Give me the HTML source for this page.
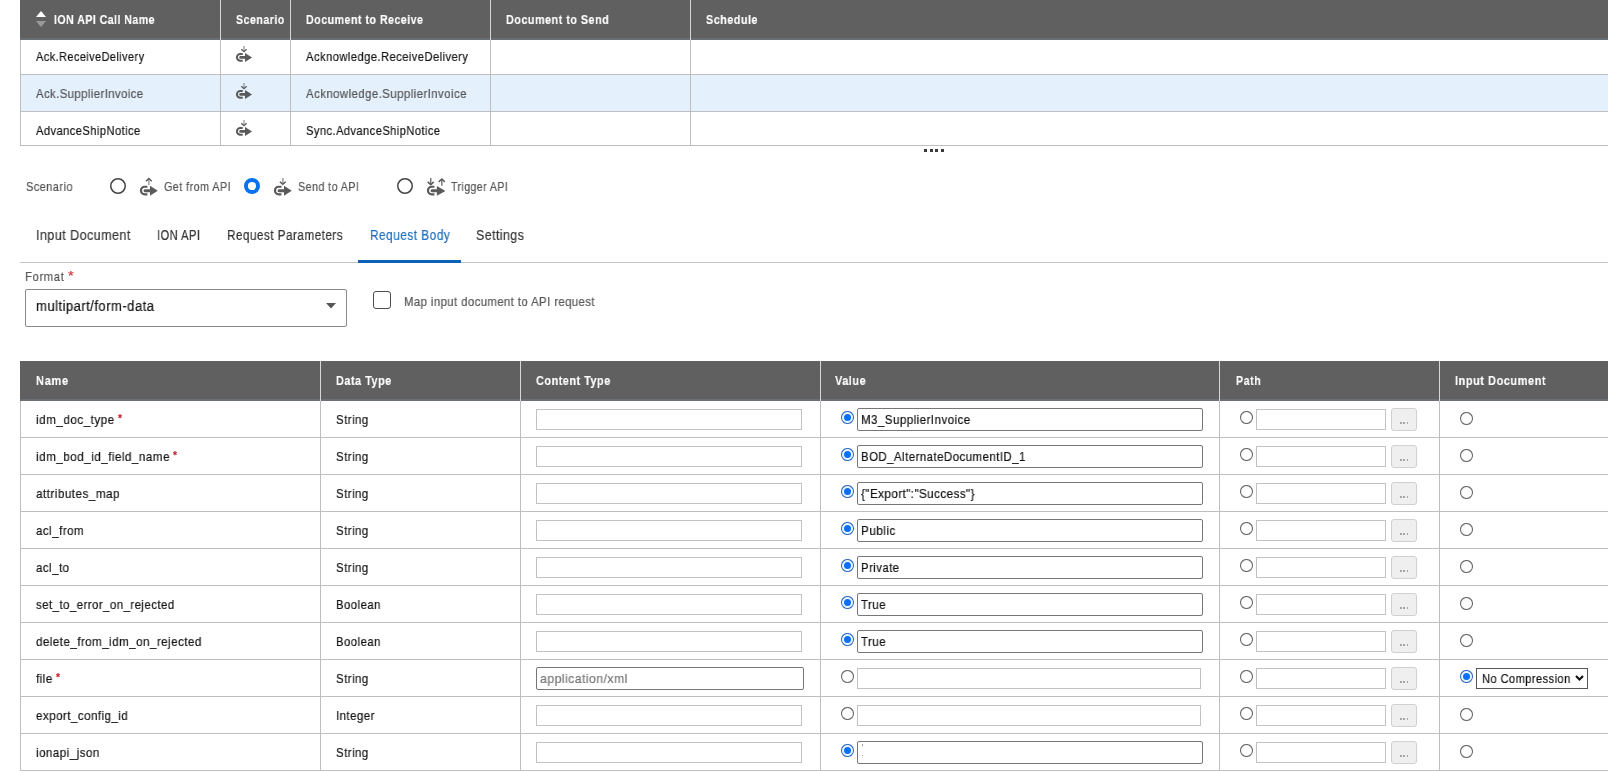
<!DOCTYPE html>
<html><head><meta charset="utf-8"><style>
html,body{margin:0;padding:0;background:#fff;}
body{width:1608px;height:773px;position:relative;overflow:hidden;font-family:"Liberation Sans",sans-serif;}
body>div,body>span,body>svg{position:absolute;}
.t{white-space:nowrap;line-height:normal;transform-origin:0 0;will-change:transform;-webkit-text-stroke:0.2px currentColor;}
.b{-webkit-text-stroke:0.15px currentColor;}
</style></head><body>
<div style="left:20px;top:0px;width:1588px;height:38px;background:#606060"></div>
<div style="left:20px;top:38px;width:1588px;height:2px;background:#6a6f75"></div>
<div style="left:20px;top:75px;width:1588px;height:36px;background:#e4f0fc"></div>
<div style="left:20px;top:74px;width:1588px;height:1px;background:#bebebe"></div>
<div style="left:20px;top:111px;width:1588px;height:1px;background:#bebebe"></div>
<div style="left:20px;top:145px;width:1588px;height:1px;background:#bebebe"></div>
<div style="left:20px;top:40px;width:1px;height:106px;background:#bebebe"></div>
<div style="left:220px;top:0px;width:1px;height:40px;background:#d6d6d6"></div>
<div style="left:220px;top:40px;width:1px;height:105px;background:#bebebe"></div>
<div style="left:290px;top:0px;width:1px;height:40px;background:#d6d6d6"></div>
<div style="left:290px;top:40px;width:1px;height:105px;background:#bebebe"></div>
<div style="left:490px;top:0px;width:1px;height:40px;background:#d6d6d6"></div>
<div style="left:490px;top:40px;width:1px;height:105px;background:#bebebe"></div>
<div style="left:690px;top:0px;width:1px;height:40px;background:#d6d6d6"></div>
<div style="left:690px;top:40px;width:1px;height:105px;background:#bebebe"></div>
<svg style="left:36px;top:11px" width="10" height="17" viewBox="0 0 10 17"><polygon points="0,6 5,0 10,6" fill="#fff"/><polygon points="0,10 10,10 5,16" fill="#9a9a9a"/></svg>
<span class="t b" style="left:53.70px;top:11.78px;font-size:13.5px;font-weight:700;color:#fff;letter-spacing:0.559px;transform:scaleX(0.7868);">ION API Call Name</span>
<span class="t b" style="left:236.00px;top:11.78px;font-size:13.5px;font-weight:700;color:#fff;letter-spacing:0.613px;transform:scaleX(0.7877);">Scenario</span>
<span class="t b" style="left:306.40px;top:11.78px;font-size:13.5px;font-weight:700;color:#fff;letter-spacing:0.574px;transform:scaleX(0.7926);">Document to Receive</span>
<span class="t b" style="left:506.30px;top:11.78px;font-size:13.5px;font-weight:700;color:#fff;letter-spacing:0.598px;transform:scaleX(0.8009);">Document to Send</span>
<span class="t b" style="left:706.00px;top:11.78px;font-size:13.5px;font-weight:700;color:#fff;letter-spacing:0.645px;transform:scaleX(0.7980);">Schedule</span>
<span class="t" style="left:36.40px;top:49.23px;font-size:13px;font-weight:400;color:#151515;letter-spacing:0.498px;transform:scaleX(0.8434);">Ack.ReceiveDelivery</span>
<span class="t" style="left:306.00px;top:49.23px;font-size:13px;font-weight:400;color:#151515;letter-spacing:0.506px;transform:scaleX(0.8611);">Acknowledge.ReceiveDelivery</span>
<svg style="left:236px;top:46px;overflow:visible" width="16.00" height="16.00" viewBox="0 0 16 16"><path d="M6.7,7.9 H4.35 A3.45,3.45 0 0 0 4.35,14.8 H6.7" fill="none" stroke="#5a5a5a" stroke-width="2.0"/><path d="M4.6,11.4 H10" stroke="#5a5a5a" stroke-width="2.7" stroke-linecap="round"/><polygon points="9,7 16,11.4 9,15.9" fill="#5a5a5a"/><path d="M8,0 V5" stroke="#888" stroke-width="1.1"/><path d="M5.3,3.3 L7.95,5.7 L10.6,3.3" fill="none" stroke="#5a5a5a" stroke-width="1.3"/></svg>
<span class="t" style="left:36.40px;top:85.83px;font-size:13px;font-weight:400;color:#555;letter-spacing:0.477px;transform:scaleX(0.8724);">Ack.SupplierInvoice</span>
<span class="t" style="left:306.00px;top:85.83px;font-size:13px;font-weight:400;color:#555;letter-spacing:0.492px;transform:scaleX(0.8784);">Acknowledge.SupplierInvoice</span>
<svg style="left:236px;top:83px;overflow:visible" width="16.00" height="16.00" viewBox="0 0 16 16"><path d="M6.7,7.9 H4.35 A3.45,3.45 0 0 0 4.35,14.8 H6.7" fill="none" stroke="#5a5a5a" stroke-width="2.0"/><path d="M4.6,11.4 H10" stroke="#5a5a5a" stroke-width="2.7" stroke-linecap="round"/><polygon points="9,7 16,11.4 9,15.9" fill="#5a5a5a"/><path d="M8,0 V5" stroke="#888" stroke-width="1.1"/><path d="M5.3,3.3 L7.95,5.7 L10.6,3.3" fill="none" stroke="#5a5a5a" stroke-width="1.3"/></svg>
<span class="t" style="left:36.40px;top:122.83px;font-size:13px;font-weight:400;color:#151515;letter-spacing:0.534px;transform:scaleX(0.8541);">AdvanceShipNotice</span>
<span class="t" style="left:306.00px;top:122.83px;font-size:13px;font-weight:400;color:#151515;letter-spacing:0.523px;transform:scaleX(0.8537);">Sync.AdvanceShipNotice</span>
<svg style="left:236px;top:120px;overflow:visible" width="16.00" height="16.00" viewBox="0 0 16 16"><path d="M6.7,7.9 H4.35 A3.45,3.45 0 0 0 4.35,14.8 H6.7" fill="none" stroke="#5a5a5a" stroke-width="2.0"/><path d="M4.6,11.4 H10" stroke="#5a5a5a" stroke-width="2.7" stroke-linecap="round"/><polygon points="9,7 16,11.4 9,15.9" fill="#5a5a5a"/><path d="M8,0 V5" stroke="#888" stroke-width="1.1"/><path d="M5.3,3.3 L7.95,5.7 L10.6,3.3" fill="none" stroke="#5a5a5a" stroke-width="1.3"/></svg>
<div style="left:924px;top:149px;width:3px;height:3px;background:#3a3a3a"></div>
<div style="left:929.6px;top:149px;width:3px;height:3px;background:#3a3a3a"></div>
<div style="left:935.3px;top:149px;width:3px;height:3px;background:#3a3a3a"></div>
<div style="left:941px;top:149px;width:3px;height:3px;background:#3a3a3a"></div>
<span class="t" style="left:25.50px;top:179.24px;font-size:13px;font-weight:400;color:#555;letter-spacing:0.552px;transform:scaleX(0.8428);">Scenario</span>
<svg style="left:110px;top:178px" width="16" height="16" viewBox="0 0 16 16"><circle cx="8" cy="8" r="7.25" fill="#fff" stroke="#444" stroke-width="1.5"/></svg>
<svg style="left:140.2px;top:178.1px;overflow:visible" width="17.76" height="17.76" viewBox="0 0 16 16"><path d="M6.7,7.9 H4.35 A3.45,3.45 0 0 0 4.35,14.8 H6.7" fill="none" stroke="#5a5a5a" stroke-width="2.0"/><path d="M4.6,11.4 H10" stroke="#5a5a5a" stroke-width="2.7" stroke-linecap="round"/><polygon points="9,7 16,11.4 9,15.9" fill="#5a5a5a"/><path d="M8,1 V6.2" stroke="#888" stroke-width="1.1"/><path d="M5.3,2.9 L7.95,0.5 L10.6,2.9" fill="none" stroke="#5a5a5a" stroke-width="1.3"/></svg>
<span class="t" style="left:164.00px;top:179.24px;font-size:13px;font-weight:400;color:#555;letter-spacing:0.509px;transform:scaleX(0.8324);">Get from API</span>
<svg style="left:244px;top:178px" width="16" height="16" viewBox="0 0 16 16"><circle cx="8" cy="8" r="6.05" fill="#fff" stroke="#0a72ea" stroke-width="3.9"/></svg>
<svg style="left:274.2px;top:177.5px;overflow:visible" width="17.76" height="17.76" viewBox="0 0 16 16"><path d="M6.7,7.9 H4.35 A3.45,3.45 0 0 0 4.35,14.8 H6.7" fill="none" stroke="#5a5a5a" stroke-width="2.0"/><path d="M4.6,11.4 H10" stroke="#5a5a5a" stroke-width="2.7" stroke-linecap="round"/><polygon points="9,7 16,11.4 9,15.9" fill="#5a5a5a"/><path d="M8,0 V5" stroke="#888" stroke-width="1.1"/><path d="M5.3,3.3 L7.95,5.7 L10.6,3.3" fill="none" stroke="#5a5a5a" stroke-width="1.3"/></svg>
<span class="t" style="left:297.70px;top:179.24px;font-size:13px;font-weight:400;color:#555;letter-spacing:0.517px;transform:scaleX(0.8248);">Send to API</span>
<svg style="left:397px;top:178px" width="16" height="16" viewBox="0 0 16 16"><circle cx="8" cy="8" r="7.25" fill="#fff" stroke="#444" stroke-width="1.5"/></svg>
<svg style="left:427.2px;top:177.6px;overflow:visible" width="17.76" height="17.76" viewBox="0 0 16 16"><path d="M6.7,7.9 H4.35 A3.45,3.45 0 0 0 4.35,14.8 H6.7" fill="none" stroke="#5a5a5a" stroke-width="2.0"/><path d="M4.6,11.4 H10" stroke="#5a5a5a" stroke-width="2.7" stroke-linecap="round"/><polygon points="8.9,7.3 16.6,11.7 8.9,16.1" fill="#5a5a5a"/><path d="M3.4,0 V5.6" stroke="#5a5a5a" stroke-width="1.1"/><path d="M0.6,3.5 L3.4,6.0 L6.0,3.5" fill="none" stroke="#5a5a5a" stroke-width="1.3"/><path d="M13.4,1.3 V6.9" stroke="#5a5a5a" stroke-width="1.1"/><path d="M10.6,3.5 L13.4,0.9 L16,3.5" fill="none" stroke="#5a5a5a" stroke-width="1.3"/></svg>
<span class="t" style="left:451.30px;top:179.24px;font-size:13px;font-weight:400;color:#555;letter-spacing:0.486px;transform:scaleX(0.8170);">Trigger API</span>
<span class="t" style="left:35.70px;top:226.93px;font-size:14px;font-weight:400;color:#333;letter-spacing:0.572px;transform:scaleX(0.8873);">Input Document</span>
<span class="t" style="left:157.00px;top:226.93px;font-size:14px;font-weight:400;color:#333;letter-spacing:0.634px;transform:scaleX(0.7908);">ION API</span>
<span class="t" style="left:227.30px;top:226.93px;font-size:14px;font-weight:400;color:#333;letter-spacing:0.568px;transform:scaleX(0.8373);">Request Parameters</span>
<span class="t" style="left:369.60px;top:226.93px;font-size:14px;font-weight:400;color:#1f6fbf;letter-spacing:0.602px;transform:scaleX(0.8438);">Request Body</span>
<span class="t" style="left:475.50px;top:226.93px;font-size:14px;font-weight:400;color:#333;letter-spacing:0.544px;transform:scaleX(0.8789);">Settings</span>
<div style="left:20px;top:262px;width:1588px;height:1px;background:#c4c4c4"></div>
<div style="left:358px;top:260px;width:103px;height:3px;background:#0d62b5"></div>
<span class="t" style="left:25.40px;top:269.44px;font-size:13px;font-weight:400;color:#555;letter-spacing:0.620px;transform:scaleX(0.8764);">Format</span>
<span class="t" style="left:68.30px;top:268.24px;font-size:13px;font-weight:400;color:#d33;letter-spacing:0.000px;transform:scaleX(1.1272);">*</span>
<div style="left:25px;top:289px;width:322px;height:38px;box-sizing:border-box;border:1px solid #8a8a8a;border-radius:2px;background:#fff"></div>
<span class="t" style="left:36.20px;top:297.93px;font-size:14px;font-weight:400;color:#151515;letter-spacing:0.491px;transform:scaleX(0.9339);">multipart/form-data</span>
<svg style="left:326px;top:303px" width="10" height="6" viewBox="0 0 10 6"><polygon points="0,0 10,0 5,5.5" fill="#555"/></svg>
<div style="left:373px;top:291px;width:18px;height:18px;box-sizing:border-box;border:1.7px solid #4d4d4d;border-radius:3px;background:#fff"></div>
<span class="t" style="left:403.50px;top:294.24px;font-size:13px;font-weight:400;color:#555;letter-spacing:0.478px;transform:scaleX(0.8724);">Map input document to API request</span>
<div style="left:20px;top:361px;width:1588px;height:38px;background:#606060"></div>
<div style="left:20px;top:399px;width:1588px;height:2px;background:#6a6f75"></div>
<div style="left:320px;top:361px;width:1px;height:40px;background:#d6d6d6"></div>
<div style="left:520px;top:361px;width:1px;height:40px;background:#d6d6d6"></div>
<div style="left:820px;top:361px;width:1px;height:40px;background:#d6d6d6"></div>
<div style="left:1219px;top:361px;width:1px;height:40px;background:#d6d6d6"></div>
<div style="left:1439px;top:361px;width:1px;height:40px;background:#d6d6d6"></div>
<div style="left:20px;top:401px;width:1px;height:370px;background:#bebebe"></div>
<div style="left:320px;top:401px;width:1px;height:370px;background:#bebebe"></div>
<div style="left:520px;top:401px;width:1px;height:370px;background:#bebebe"></div>
<div style="left:820px;top:401px;width:1px;height:370px;background:#bebebe"></div>
<div style="left:1219px;top:401px;width:1px;height:370px;background:#bebebe"></div>
<div style="left:1439px;top:401px;width:1px;height:370px;background:#bebebe"></div>
<div style="left:20px;top:437px;width:1588px;height:1px;background:#bebebe"></div>
<div style="left:20px;top:474px;width:1588px;height:1px;background:#bebebe"></div>
<div style="left:20px;top:511px;width:1588px;height:1px;background:#bebebe"></div>
<div style="left:20px;top:548px;width:1588px;height:1px;background:#bebebe"></div>
<div style="left:20px;top:585px;width:1588px;height:1px;background:#bebebe"></div>
<div style="left:20px;top:622px;width:1588px;height:1px;background:#bebebe"></div>
<div style="left:20px;top:659px;width:1588px;height:1px;background:#bebebe"></div>
<div style="left:20px;top:696px;width:1588px;height:1px;background:#bebebe"></div>
<div style="left:20px;top:733px;width:1588px;height:1px;background:#bebebe"></div>
<div style="left:20px;top:770px;width:1588px;height:1px;background:#bebebe"></div>
<span class="t b" style="left:35.50px;top:372.78px;font-size:13.5px;font-weight:700;color:#fff;letter-spacing:0.923px;transform:scaleX(0.8118);">Name</span>
<span class="t b" style="left:335.80px;top:372.78px;font-size:13.5px;font-weight:700;color:#fff;letter-spacing:0.598px;transform:scaleX(0.8097);">Data Type</span>
<span class="t b" style="left:535.80px;top:372.78px;font-size:13.5px;font-weight:700;color:#fff;letter-spacing:0.583px;transform:scaleX(0.8094);">Content Type</span>
<span class="t b" style="left:835.20px;top:372.78px;font-size:13.5px;font-weight:700;color:#fff;letter-spacing:0.664px;transform:scaleX(0.8067);">Value</span>
<span class="t b" style="left:1235.60px;top:372.78px;font-size:13.5px;font-weight:700;color:#fff;letter-spacing:0.734px;transform:scaleX(0.7852);">Path</span>
<span class="t b" style="left:1455.20px;top:372.78px;font-size:13.5px;font-weight:700;color:#fff;letter-spacing:0.595px;transform:scaleX(0.8192);">Input Document</span>
<span class="t" style="left:36.00px;top:412.04px;font-size:13px;font-weight:400;color:#151515;letter-spacing:0.554px;transform:scaleX(0.8985);">idm_doc_type</span>
<span class="t b" style="left:117.80px;top:413.35px;font-size:10px;font-weight:700;color:#c62430;letter-spacing:0.000px;transform:scaleX(1.0283);">*</span>
<span class="t" style="left:336.00px;top:412.04px;font-size:13px;font-weight:400;color:#151515;letter-spacing:0.511px;transform:scaleX(0.8819);">String</span>
<div style="left:536px;top:409px;width:266px;height:21px;box-sizing:border-box;border:1px solid #c2c2c2;background:#fff"></div>
<svg style="left:841px;top:411px" width="13" height="13" viewBox="0 0 13 13"><circle cx="6.5" cy="6.5" r="6" fill="#fff" stroke="#356cc4" stroke-width="1.1"/><circle cx="6.5" cy="6.5" r="4.6" fill="none" stroke="#c8f0ff" stroke-width="0.8"/><circle cx="6.5" cy="6.5" r="3.5" fill="#0a6ff8"/></svg>
<div style="left:857px;top:408px;width:346px;height:23px;box-sizing:border-box;border:1px solid #767676;border-radius:2px;background:#fff"></div>
<span class="t" style="left:861.00px;top:412.04px;font-size:13px;font-weight:400;color:#111;letter-spacing:0.506px;transform:scaleX(0.8894);">M3_SupplierInvoice</span>
<svg style="left:1240px;top:411px" width="13" height="13" viewBox="0 0 13 13"><circle cx="6.5" cy="6.5" r="6" fill="#fff" stroke="#6a6a6a" stroke-width="1.1"/></svg>
<div style="left:1256px;top:409px;width:130px;height:21px;box-sizing:border-box;border:1px solid #c2c2c2;background:#fff"></div>
<div style="left:1391px;top:408px;width:26px;height:23px;box-sizing:border-box;border:1px solid #d0d0d0;border-radius:3px;background:#efefef"></div>
<div style="left:1400px;top:422.3px;width:1.7px;height:1.7px;background:#a5a5a5"></div>
<div style="left:1403.3px;top:422.3px;width:1.7px;height:1.7px;background:#a5a5a5"></div>
<div style="left:1406.6px;top:422.3px;width:1.7px;height:1.7px;background:#a5a5a5"></div>
<svg style="left:1460px;top:412px" width="13" height="13" viewBox="0 0 13 13"><circle cx="6.5" cy="6.5" r="6" fill="#fff" stroke="#6a6a6a" stroke-width="1.1"/></svg>
<span class="t" style="left:36.00px;top:449.04px;font-size:13px;font-weight:400;color:#151515;letter-spacing:0.520px;transform:scaleX(0.9000);">idm_bod_id_field_name</span>
<span class="t b" style="left:173.20px;top:450.35px;font-size:10px;font-weight:700;color:#c62430;letter-spacing:0.000px;transform:scaleX(1.0283);">*</span>
<span class="t" style="left:336.00px;top:449.04px;font-size:13px;font-weight:400;color:#151515;letter-spacing:0.511px;transform:scaleX(0.8819);">String</span>
<div style="left:536px;top:446px;width:266px;height:21px;box-sizing:border-box;border:1px solid #c2c2c2;background:#fff"></div>
<svg style="left:841px;top:448px" width="13" height="13" viewBox="0 0 13 13"><circle cx="6.5" cy="6.5" r="6" fill="#fff" stroke="#356cc4" stroke-width="1.1"/><circle cx="6.5" cy="6.5" r="4.6" fill="none" stroke="#c8f0ff" stroke-width="0.8"/><circle cx="6.5" cy="6.5" r="3.5" fill="#0a6ff8"/></svg>
<div style="left:857px;top:445px;width:346px;height:23px;box-sizing:border-box;border:1px solid #767676;border-radius:2px;background:#fff"></div>
<span class="t" style="left:861.00px;top:449.04px;font-size:13px;font-weight:400;color:#111;letter-spacing:0.546px;transform:scaleX(0.8779);">BOD_AlternateDocumentID_1</span>
<svg style="left:1240px;top:448px" width="13" height="13" viewBox="0 0 13 13"><circle cx="6.5" cy="6.5" r="6" fill="#fff" stroke="#6a6a6a" stroke-width="1.1"/></svg>
<div style="left:1256px;top:446px;width:130px;height:21px;box-sizing:border-box;border:1px solid #c2c2c2;background:#fff"></div>
<div style="left:1391px;top:445px;width:26px;height:23px;box-sizing:border-box;border:1px solid #d0d0d0;border-radius:3px;background:#efefef"></div>
<div style="left:1400px;top:459.3px;width:1.7px;height:1.7px;background:#a5a5a5"></div>
<div style="left:1403.3px;top:459.3px;width:1.7px;height:1.7px;background:#a5a5a5"></div>
<div style="left:1406.6px;top:459.3px;width:1.7px;height:1.7px;background:#a5a5a5"></div>
<svg style="left:1460px;top:449px" width="13" height="13" viewBox="0 0 13 13"><circle cx="6.5" cy="6.5" r="6" fill="#fff" stroke="#6a6a6a" stroke-width="1.1"/></svg>
<span class="t" style="left:36.00px;top:486.04px;font-size:13px;font-weight:400;color:#151515;letter-spacing:0.498px;transform:scaleX(0.9030);">attributes_map</span>
<span class="t" style="left:336.00px;top:486.04px;font-size:13px;font-weight:400;color:#151515;letter-spacing:0.511px;transform:scaleX(0.8819);">String</span>
<div style="left:536px;top:483px;width:266px;height:21px;box-sizing:border-box;border:1px solid #c2c2c2;background:#fff"></div>
<svg style="left:841px;top:485px" width="13" height="13" viewBox="0 0 13 13"><circle cx="6.5" cy="6.5" r="6" fill="#fff" stroke="#356cc4" stroke-width="1.1"/><circle cx="6.5" cy="6.5" r="4.6" fill="none" stroke="#c8f0ff" stroke-width="0.8"/><circle cx="6.5" cy="6.5" r="3.5" fill="#0a6ff8"/></svg>
<div style="left:857px;top:482px;width:346px;height:23px;box-sizing:border-box;border:1px solid #767676;border-radius:2px;background:#fff"></div>
<span class="t" style="left:861.00px;top:486.04px;font-size:13px;font-weight:400;color:#111;letter-spacing:0.465px;transform:scaleX(0.8987);">{"Export":"Success"}</span>
<svg style="left:1240px;top:485px" width="13" height="13" viewBox="0 0 13 13"><circle cx="6.5" cy="6.5" r="6" fill="#fff" stroke="#6a6a6a" stroke-width="1.1"/></svg>
<div style="left:1256px;top:483px;width:130px;height:21px;box-sizing:border-box;border:1px solid #c2c2c2;background:#fff"></div>
<div style="left:1391px;top:482px;width:26px;height:23px;box-sizing:border-box;border:1px solid #d0d0d0;border-radius:3px;background:#efefef"></div>
<div style="left:1400px;top:496.3px;width:1.7px;height:1.7px;background:#a5a5a5"></div>
<div style="left:1403.3px;top:496.3px;width:1.7px;height:1.7px;background:#a5a5a5"></div>
<div style="left:1406.6px;top:496.3px;width:1.7px;height:1.7px;background:#a5a5a5"></div>
<svg style="left:1460px;top:486px" width="13" height="13" viewBox="0 0 13 13"><circle cx="6.5" cy="6.5" r="6" fill="#fff" stroke="#6a6a6a" stroke-width="1.1"/></svg>
<span class="t" style="left:36.00px;top:523.03px;font-size:13px;font-weight:400;color:#151515;letter-spacing:0.536px;transform:scaleX(0.8879);">acl_from</span>
<span class="t" style="left:336.00px;top:523.03px;font-size:13px;font-weight:400;color:#151515;letter-spacing:0.511px;transform:scaleX(0.8819);">String</span>
<div style="left:536px;top:520px;width:266px;height:21px;box-sizing:border-box;border:1px solid #c2c2c2;background:#fff"></div>
<svg style="left:841px;top:522px" width="13" height="13" viewBox="0 0 13 13"><circle cx="6.5" cy="6.5" r="6" fill="#fff" stroke="#356cc4" stroke-width="1.1"/><circle cx="6.5" cy="6.5" r="4.6" fill="none" stroke="#c8f0ff" stroke-width="0.8"/><circle cx="6.5" cy="6.5" r="3.5" fill="#0a6ff8"/></svg>
<div style="left:857px;top:519px;width:346px;height:23px;box-sizing:border-box;border:1px solid #767676;border-radius:2px;background:#fff"></div>
<span class="t" style="left:861.00px;top:523.03px;font-size:13px;font-weight:400;color:#111;letter-spacing:0.533px;transform:scaleX(0.9008);">Public</span>
<svg style="left:1240px;top:522px" width="13" height="13" viewBox="0 0 13 13"><circle cx="6.5" cy="6.5" r="6" fill="#fff" stroke="#6a6a6a" stroke-width="1.1"/></svg>
<div style="left:1256px;top:520px;width:130px;height:21px;box-sizing:border-box;border:1px solid #c2c2c2;background:#fff"></div>
<div style="left:1391px;top:519px;width:26px;height:23px;box-sizing:border-box;border:1px solid #d0d0d0;border-radius:3px;background:#efefef"></div>
<div style="left:1400px;top:533.3px;width:1.7px;height:1.7px;background:#a5a5a5"></div>
<div style="left:1403.3px;top:533.3px;width:1.7px;height:1.7px;background:#a5a5a5"></div>
<div style="left:1406.6px;top:533.3px;width:1.7px;height:1.7px;background:#a5a5a5"></div>
<svg style="left:1460px;top:523px" width="13" height="13" viewBox="0 0 13 13"><circle cx="6.5" cy="6.5" r="6" fill="#fff" stroke="#6a6a6a" stroke-width="1.1"/></svg>
<span class="t" style="left:36.00px;top:560.03px;font-size:13px;font-weight:400;color:#151515;letter-spacing:0.522px;transform:scaleX(0.8848);">acl_to</span>
<span class="t" style="left:336.00px;top:560.03px;font-size:13px;font-weight:400;color:#151515;letter-spacing:0.511px;transform:scaleX(0.8819);">String</span>
<div style="left:536px;top:557px;width:266px;height:21px;box-sizing:border-box;border:1px solid #c2c2c2;background:#fff"></div>
<svg style="left:841px;top:559px" width="13" height="13" viewBox="0 0 13 13"><circle cx="6.5" cy="6.5" r="6" fill="#fff" stroke="#356cc4" stroke-width="1.1"/><circle cx="6.5" cy="6.5" r="4.6" fill="none" stroke="#c8f0ff" stroke-width="0.8"/><circle cx="6.5" cy="6.5" r="3.5" fill="#0a6ff8"/></svg>
<div style="left:857px;top:556px;width:346px;height:23px;box-sizing:border-box;border:1px solid #767676;border-radius:2px;background:#fff"></div>
<span class="t" style="left:861.00px;top:560.03px;font-size:13px;font-weight:400;color:#111;letter-spacing:0.508px;transform:scaleX(0.8735);">Private</span>
<svg style="left:1240px;top:559px" width="13" height="13" viewBox="0 0 13 13"><circle cx="6.5" cy="6.5" r="6" fill="#fff" stroke="#6a6a6a" stroke-width="1.1"/></svg>
<div style="left:1256px;top:557px;width:130px;height:21px;box-sizing:border-box;border:1px solid #c2c2c2;background:#fff"></div>
<div style="left:1391px;top:556px;width:26px;height:23px;box-sizing:border-box;border:1px solid #d0d0d0;border-radius:3px;background:#efefef"></div>
<div style="left:1400px;top:570.3px;width:1.7px;height:1.7px;background:#a5a5a5"></div>
<div style="left:1403.3px;top:570.3px;width:1.7px;height:1.7px;background:#a5a5a5"></div>
<div style="left:1406.6px;top:570.3px;width:1.7px;height:1.7px;background:#a5a5a5"></div>
<svg style="left:1460px;top:560px" width="13" height="13" viewBox="0 0 13 13"><circle cx="6.5" cy="6.5" r="6" fill="#fff" stroke="#6a6a6a" stroke-width="1.1"/></svg>
<span class="t" style="left:36.00px;top:597.03px;font-size:13px;font-weight:400;color:#151515;letter-spacing:0.475px;transform:scaleX(0.8848);">set_to_error_on_rejected</span>
<span class="t" style="left:336.00px;top:597.03px;font-size:13px;font-weight:400;color:#151515;letter-spacing:0.599px;transform:scaleX(0.8655);">Boolean</span>
<div style="left:536px;top:594px;width:266px;height:21px;box-sizing:border-box;border:1px solid #c2c2c2;background:#fff"></div>
<svg style="left:841px;top:596px" width="13" height="13" viewBox="0 0 13 13"><circle cx="6.5" cy="6.5" r="6" fill="#fff" stroke="#356cc4" stroke-width="1.1"/><circle cx="6.5" cy="6.5" r="4.6" fill="none" stroke="#c8f0ff" stroke-width="0.8"/><circle cx="6.5" cy="6.5" r="3.5" fill="#0a6ff8"/></svg>
<div style="left:857px;top:593px;width:346px;height:23px;box-sizing:border-box;border:1px solid #767676;border-radius:2px;background:#fff"></div>
<span class="t" style="left:861.00px;top:597.03px;font-size:13px;font-weight:400;color:#111;letter-spacing:0.659px;transform:scaleX(0.8716);">True</span>
<svg style="left:1240px;top:596px" width="13" height="13" viewBox="0 0 13 13"><circle cx="6.5" cy="6.5" r="6" fill="#fff" stroke="#6a6a6a" stroke-width="1.1"/></svg>
<div style="left:1256px;top:594px;width:130px;height:21px;box-sizing:border-box;border:1px solid #c2c2c2;background:#fff"></div>
<div style="left:1391px;top:593px;width:26px;height:23px;box-sizing:border-box;border:1px solid #d0d0d0;border-radius:3px;background:#efefef"></div>
<div style="left:1400px;top:607.3px;width:1.7px;height:1.7px;background:#a5a5a5"></div>
<div style="left:1403.3px;top:607.3px;width:1.7px;height:1.7px;background:#a5a5a5"></div>
<div style="left:1406.6px;top:607.3px;width:1.7px;height:1.7px;background:#a5a5a5"></div>
<svg style="left:1460px;top:597px" width="13" height="13" viewBox="0 0 13 13"><circle cx="6.5" cy="6.5" r="6" fill="#fff" stroke="#6a6a6a" stroke-width="1.1"/></svg>
<span class="t" style="left:36.00px;top:634.03px;font-size:13px;font-weight:400;color:#151515;letter-spacing:0.498px;transform:scaleX(0.8938);">delete_from_idm_on_rejected</span>
<span class="t" style="left:336.00px;top:634.03px;font-size:13px;font-weight:400;color:#151515;letter-spacing:0.599px;transform:scaleX(0.8655);">Boolean</span>
<div style="left:536px;top:631px;width:266px;height:21px;box-sizing:border-box;border:1px solid #c2c2c2;background:#fff"></div>
<svg style="left:841px;top:633px" width="13" height="13" viewBox="0 0 13 13"><circle cx="6.5" cy="6.5" r="6" fill="#fff" stroke="#356cc4" stroke-width="1.1"/><circle cx="6.5" cy="6.5" r="4.6" fill="none" stroke="#c8f0ff" stroke-width="0.8"/><circle cx="6.5" cy="6.5" r="3.5" fill="#0a6ff8"/></svg>
<div style="left:857px;top:630px;width:346px;height:23px;box-sizing:border-box;border:1px solid #767676;border-radius:2px;background:#fff"></div>
<span class="t" style="left:861.00px;top:634.03px;font-size:13px;font-weight:400;color:#111;letter-spacing:0.659px;transform:scaleX(0.8716);">True</span>
<svg style="left:1240px;top:633px" width="13" height="13" viewBox="0 0 13 13"><circle cx="6.5" cy="6.5" r="6" fill="#fff" stroke="#6a6a6a" stroke-width="1.1"/></svg>
<div style="left:1256px;top:631px;width:130px;height:21px;box-sizing:border-box;border:1px solid #c2c2c2;background:#fff"></div>
<div style="left:1391px;top:630px;width:26px;height:23px;box-sizing:border-box;border:1px solid #d0d0d0;border-radius:3px;background:#efefef"></div>
<div style="left:1400px;top:644.3px;width:1.7px;height:1.7px;background:#a5a5a5"></div>
<div style="left:1403.3px;top:644.3px;width:1.7px;height:1.7px;background:#a5a5a5"></div>
<div style="left:1406.6px;top:644.3px;width:1.7px;height:1.7px;background:#a5a5a5"></div>
<svg style="left:1460px;top:634px" width="13" height="13" viewBox="0 0 13 13"><circle cx="6.5" cy="6.5" r="6" fill="#fff" stroke="#6a6a6a" stroke-width="1.1"/></svg>
<span class="t" style="left:36.00px;top:671.03px;font-size:13px;font-weight:400;color:#151515;letter-spacing:0.417px;transform:scaleX(0.9068);">file</span>
<span class="t b" style="left:55.80px;top:672.35px;font-size:10px;font-weight:700;color:#c62430;letter-spacing:0.000px;transform:scaleX(1.0283);">*</span>
<span class="t" style="left:336.00px;top:671.03px;font-size:13px;font-weight:400;color:#151515;letter-spacing:0.511px;transform:scaleX(0.8819);">String</span>
<div style="left:536px;top:667px;width:268px;height:23px;box-sizing:border-box;border:1px solid #767676;border-radius:2px;background:#fff"></div>
<span class="t" style="left:539.90px;top:670.63px;font-size:13px;font-weight:400;color:#757575;letter-spacing:0.462px;transform:scaleX(0.9453);">application/xml</span>
<svg style="left:841px;top:670px" width="13" height="13" viewBox="0 0 13 13"><circle cx="6.5" cy="6.5" r="6" fill="#fff" stroke="#6a6a6a" stroke-width="1.1"/></svg>
<div style="left:857px;top:668px;width:344px;height:21px;box-sizing:border-box;border:1px solid #c2c2c2;background:#fff"></div>
<svg style="left:1240px;top:670px" width="13" height="13" viewBox="0 0 13 13"><circle cx="6.5" cy="6.5" r="6" fill="#fff" stroke="#6a6a6a" stroke-width="1.1"/></svg>
<div style="left:1256px;top:668px;width:130px;height:21px;box-sizing:border-box;border:1px solid #c2c2c2;background:#fff"></div>
<div style="left:1391px;top:667px;width:26px;height:23px;box-sizing:border-box;border:1px solid #d0d0d0;border-radius:3px;background:#efefef"></div>
<div style="left:1400px;top:681.3px;width:1.7px;height:1.7px;background:#a5a5a5"></div>
<div style="left:1403.3px;top:681.3px;width:1.7px;height:1.7px;background:#a5a5a5"></div>
<div style="left:1406.6px;top:681.3px;width:1.7px;height:1.7px;background:#a5a5a5"></div>
<svg style="left:1460px;top:670px" width="13" height="13" viewBox="0 0 13 13"><circle cx="6.5" cy="6.5" r="6" fill="#fff" stroke="#356cc4" stroke-width="1.1"/><circle cx="6.5" cy="6.5" r="4.6" fill="none" stroke="#c8f0ff" stroke-width="0.8"/><circle cx="6.5" cy="6.5" r="3.5" fill="#0a6ff8"/></svg>
<div style="left:1476px;top:668px;width:112px;height:21px;box-sizing:border-box;border:1px solid #555;background:#fff"></div>
<span class="t" style="left:1481.80px;top:670.94px;font-size:13px;font-weight:400;color:#111;letter-spacing:0.561px;transform:scaleX(0.8473);">No Compression</span>
<svg style="left:1574.5px;top:675.3px" width="9" height="6" viewBox="0 0 9 6"><path d="M1,1 L4.5,4.5 L8,1" fill="none" stroke="#111" stroke-width="2.1"/></svg>
<span class="t" style="left:36.00px;top:708.03px;font-size:13px;font-weight:400;color:#151515;letter-spacing:0.479px;transform:scaleX(0.8950);">export_config_id</span>
<span class="t" style="left:336.00px;top:708.03px;font-size:13px;font-weight:400;color:#151515;letter-spacing:0.508px;transform:scaleX(0.8825);">Integer</span>
<div style="left:536px;top:705px;width:266px;height:21px;box-sizing:border-box;border:1px solid #c2c2c2;background:#fff"></div>
<svg style="left:841px;top:707px" width="13" height="13" viewBox="0 0 13 13"><circle cx="6.5" cy="6.5" r="6" fill="#fff" stroke="#6a6a6a" stroke-width="1.1"/></svg>
<div style="left:857px;top:705px;width:344px;height:21px;box-sizing:border-box;border:1px solid #c2c2c2;background:#fff"></div>
<svg style="left:1240px;top:707px" width="13" height="13" viewBox="0 0 13 13"><circle cx="6.5" cy="6.5" r="6" fill="#fff" stroke="#6a6a6a" stroke-width="1.1"/></svg>
<div style="left:1256px;top:705px;width:130px;height:21px;box-sizing:border-box;border:1px solid #c2c2c2;background:#fff"></div>
<div style="left:1391px;top:704px;width:26px;height:23px;box-sizing:border-box;border:1px solid #d0d0d0;border-radius:3px;background:#efefef"></div>
<div style="left:1400px;top:718.3px;width:1.7px;height:1.7px;background:#a5a5a5"></div>
<div style="left:1403.3px;top:718.3px;width:1.7px;height:1.7px;background:#a5a5a5"></div>
<div style="left:1406.6px;top:718.3px;width:1.7px;height:1.7px;background:#a5a5a5"></div>
<svg style="left:1460px;top:708px" width="13" height="13" viewBox="0 0 13 13"><circle cx="6.5" cy="6.5" r="6" fill="#fff" stroke="#6a6a6a" stroke-width="1.1"/></svg>
<span class="t" style="left:36.00px;top:745.03px;font-size:13px;font-weight:400;color:#151515;letter-spacing:0.495px;transform:scaleX(0.8949);">ionapi_json</span>
<span class="t" style="left:336.00px;top:745.03px;font-size:13px;font-weight:400;color:#151515;letter-spacing:0.511px;transform:scaleX(0.8819);">String</span>
<div style="left:536px;top:742px;width:266px;height:21px;box-sizing:border-box;border:1px solid #c2c2c2;background:#fff"></div>
<svg style="left:841px;top:744px" width="13" height="13" viewBox="0 0 13 13"><circle cx="6.5" cy="6.5" r="6" fill="#fff" stroke="#356cc4" stroke-width="1.1"/><circle cx="6.5" cy="6.5" r="4.6" fill="none" stroke="#c8f0ff" stroke-width="0.8"/><circle cx="6.5" cy="6.5" r="3.5" fill="#0a6ff8"/></svg>
<div style="left:857px;top:741px;width:346px;height:23px;box-sizing:border-box;border:1px solid #767676;border-radius:2px;background:#fff"></div>
<div style="left:862px;top:744px;width:1.2px;height:1.5px;background:#999"></div>
<div style="left:862px;top:754.5px;width:1.2px;height:1.2px;background:#999"></div>
<svg style="left:1240px;top:744px" width="13" height="13" viewBox="0 0 13 13"><circle cx="6.5" cy="6.5" r="6" fill="#fff" stroke="#6a6a6a" stroke-width="1.1"/></svg>
<div style="left:1256px;top:742px;width:130px;height:21px;box-sizing:border-box;border:1px solid #c2c2c2;background:#fff"></div>
<div style="left:1391px;top:741px;width:26px;height:23px;box-sizing:border-box;border:1px solid #d0d0d0;border-radius:3px;background:#efefef"></div>
<div style="left:1400px;top:755.3px;width:1.7px;height:1.7px;background:#a5a5a5"></div>
<div style="left:1403.3px;top:755.3px;width:1.7px;height:1.7px;background:#a5a5a5"></div>
<div style="left:1406.6px;top:755.3px;width:1.7px;height:1.7px;background:#a5a5a5"></div>
<svg style="left:1460px;top:745px" width="13" height="13" viewBox="0 0 13 13"><circle cx="6.5" cy="6.5" r="6" fill="#fff" stroke="#6a6a6a" stroke-width="1.1"/></svg>
</body></html>
